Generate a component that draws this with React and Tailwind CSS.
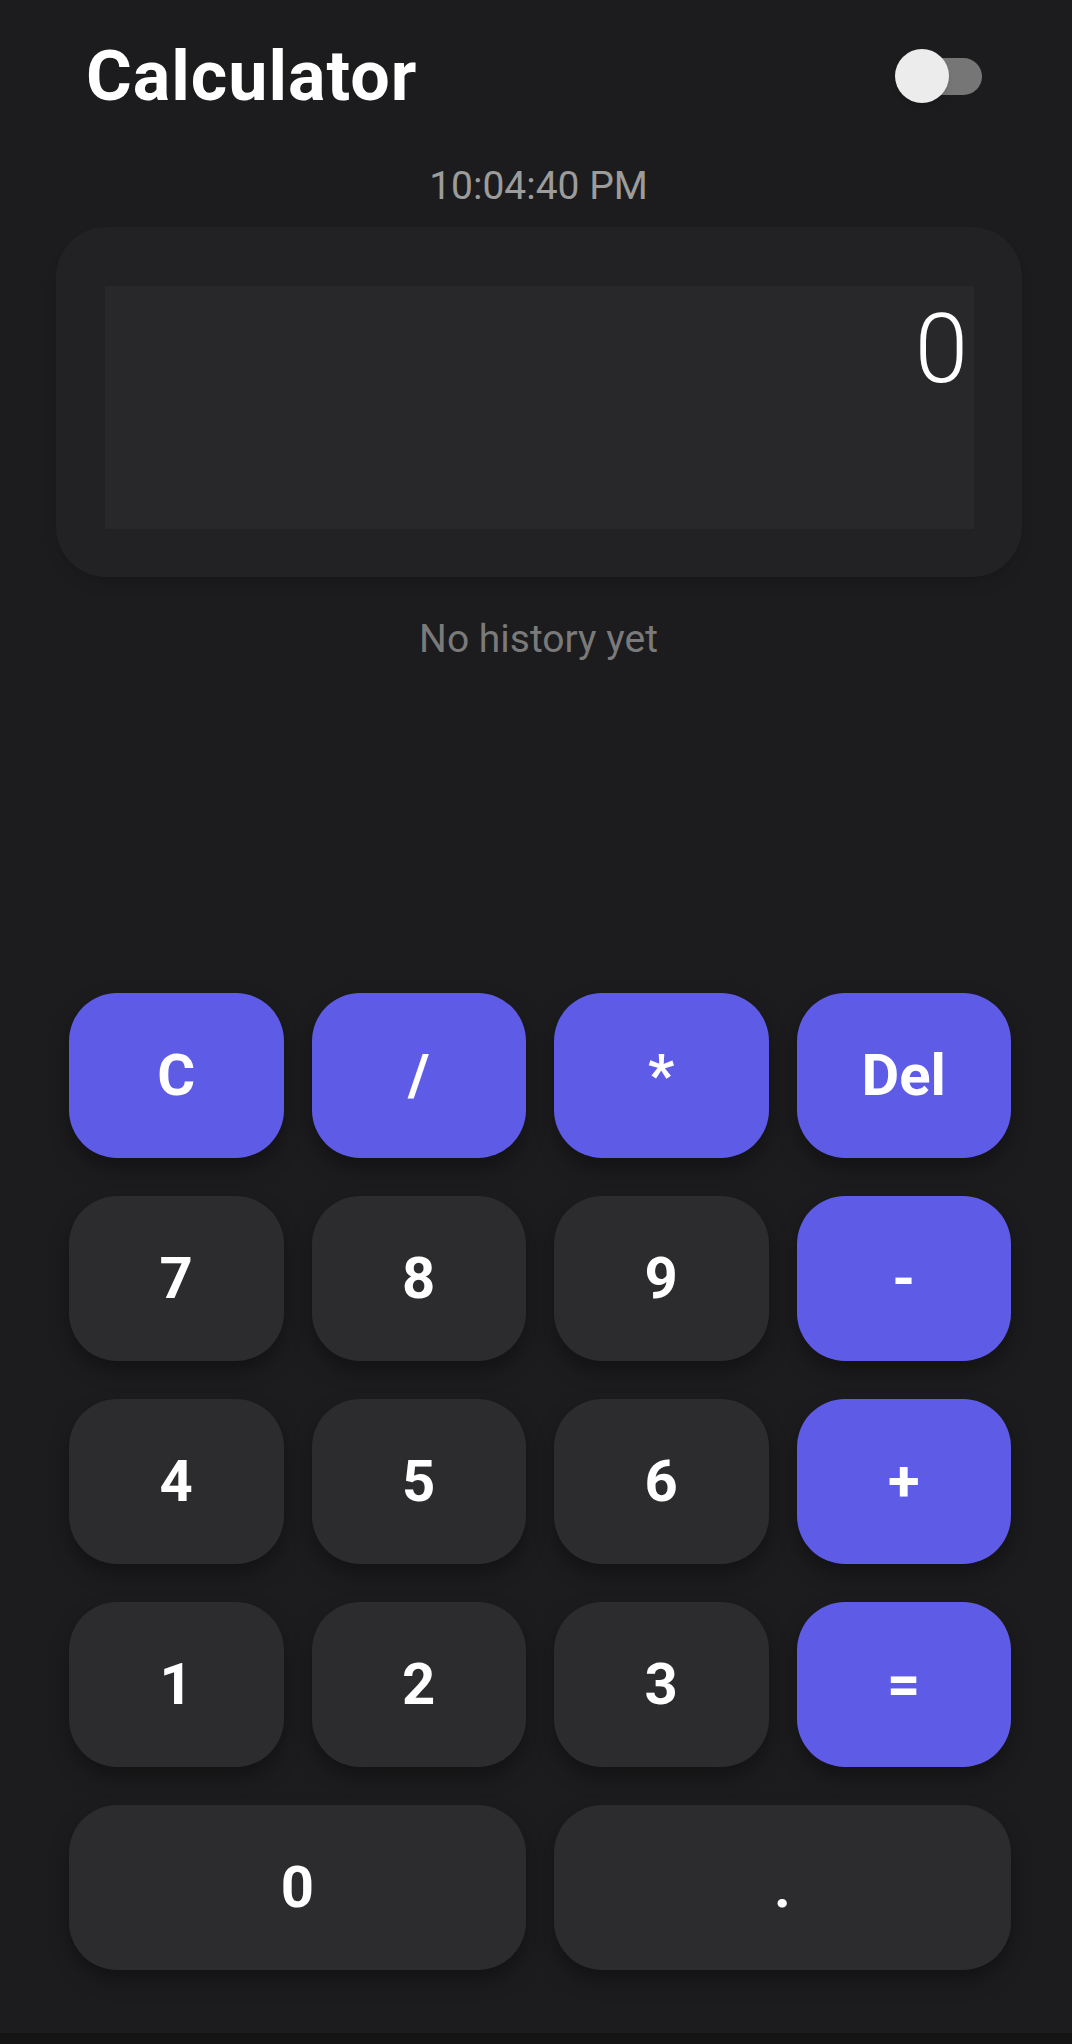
import { useState } from "react";

const keys = [
  { label: "C", op: true },
  { label: "/", op: true },
  { label: "*", op: true },
  { label: "Del", op: true },
  { label: "7" },
  { label: "8" },
  { label: "9" },
  { label: "-", op: true },
  { label: "4" },
  { label: "5" },
  { label: "6" },
  { label: "+", op: true },
  { label: "1" },
  { label: "2" },
  { label: "3" },
  { label: "=", op: true },
  { label: "0", wide: true },
  { label: ".", wide: true },
];

export default function App() {
  const [display] = useState("0");

  return (
    <div className="min-h-screen bg-[#141414]" style={{ fontFamily: "Roboto, 'Noto Sans', sans-serif" }}>
      <div className="h-[2033px] bg-[#1c1c1e] flex flex-col">
        {/* Header */}
        <div className="h-[152px] flex items-center justify-between pl-[86px] pr-[90px]">
          <h1 className="text-[70px] leading-none font-bold text-white tracking-[1px]">Calculator</h1>
          <div className="relative w-[87px] h-[54px] flex items-center">
            <div className="absolute right-0 w-[80px] h-[37px] rounded-full bg-[#767676]" />
            <div className="absolute left-0 w-[54px] h-[54px] rounded-full bg-[#ececec] shadow-md" />
          </div>
        </div>

        <p className="mt-[12px] pl-[5px] text-center text-[39px] leading-[44px] text-[#9c9c9c]">10:04:40 PM</p>

        {/* Display */}
        <div className="mt-[19px] ml-[56px] mr-[50px] h-[350px] rounded-[50px] bg-[#222224] pt-[59px] pb-[48px] pl-[49px] pr-[48px] shadow-lg">
          <div className="h-full bg-[#28282a] pt-[6px] pr-[6px] text-right text-[96px] leading-[1.2] font-light text-white">
            {display}
          </div>
        </div>

        <p className="mt-[40px] pl-[5px] text-center text-[39px] leading-[44px] text-[#7a7a7a]">No history yet</p>

        {/* Keypad */}
        <div className="mt-[332px] ml-[69px] mr-[61px] grid grid-cols-4 gap-x-[28px] gap-y-[38px]">
          {keys.map((k) => (
            <button
              key={k.label}
              className={`h-[165px] rounded-[48px] flex items-center justify-center text-[58px] font-bold text-white shadow-[0_10px_20px_rgba(0,0,0,0.35)] ${
                k.op ? "bg-[#5e5ce6]" : "bg-[#2c2c2e]"
              } ${k.wide ? "col-span-2" : ""}`}
            >
              {k.label}
            </button>
          ))}
        </div>
      </div>
    </div>
  );
}
